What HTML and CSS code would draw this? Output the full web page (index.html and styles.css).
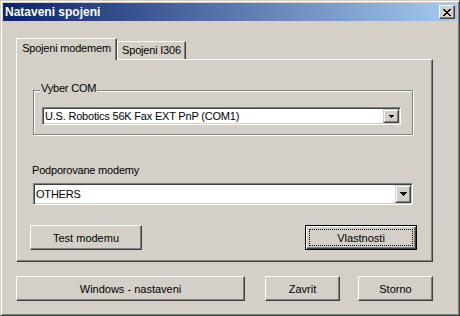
FILE: index.html
```html
<!DOCTYPE html>
<html lang="cs">
<head>
    <meta charset="UTF-8">
    <title>Nataveni spojeni</title>
    <link rel="stylesheet" href="styles.css">
</head>
<body>
    <div class="window">
        <div class="titlebar">
            <span class="title">Nataveni spojeni</span>
            <span class="close">
                <svg width="8" height="7" viewBox="0 0 8 7" shape-rendering="crispEdges"><path d="M0 0h2v1H0zM6 0h2v1H6zM1 1h2v1H1zM5 1h2v1H5zM2 2h4v1H2zM3 3h2v1H3zM2 4h4v1H2zM1 5h2v1H1zM5 5h2v1H5zM0 6h2v1H0zM6 6h2v1H6z" fill="#000"/></svg>
            </span>
        </div>

        <div class="content">
            <div class="tabs">
                <div class="tab tab-active">Spojeni modemem</div>
                <div class="tab tab-back">Spojeni I306</div>
            </div>

            <div class="panel">
                <div class="group">
                    <div class="group-label">Vyber COM</div>
                    <div class="combo combo-small">
                        <span class="combo-text">U.S. Robotics 56K Fax EXT PnP (COM1)</span>
                        <span class="combo-btn">
                            <svg width="5" height="3" viewBox="0 0 5 3" shape-rendering="crispEdges"><path d="M0 0h5v1h-1v1h-1v1h-1v-1h-1v-1h-1z" fill="#000"/></svg>
                        </span>
                    </div>
                </div>

                <div class="field-label">Podporovane modemy</div>
                <div class="combo combo-large">
                    <span class="combo-text">OTHERS</span>
                    <span class="combo-btn">
                        <svg width="7" height="4" viewBox="0 0 7 4" shape-rendering="crispEdges"><path d="M0 0h7v1h-1v1h-1v1h-1v1h-1v-1h-1v-1h-1v-1h-1z" fill="#000"/></svg>
                    </span>
                </div>

                <div class="panel-buttons">
                    <button class="btn btn-panel">Test modemu</button>
                    <button class="btn btn-panel btn-default">Vlastnosti</button>
                </div>
            </div>

            <div class="dialog-buttons">
                <button class="btn btn-wide">Windows - nastaveni</button>
                <button class="btn btn-close">Zavrit</button>
                <button class="btn btn-cancel">Storno</button>
            </div>
        </div>
    </div>
</body>
</html>
```

FILE: styles.css
```css
* {
    box-sizing: border-box;
}

body {
    margin: 0;
    background: #d4d0c8;
    font-family: "Liberation Sans", Arial, sans-serif;
    font-size: 11px;
    letter-spacing: -0.2px;
    color: #000;
    overflow: hidden;
}

.window {
    width: 460px;
    height: 316px;
    padding: 2px;
    background: #d4d0c8;
    border: 1px solid;
    border-color: #d4d0c8 #404040 #404040 #d4d0c8;
    box-shadow: inset 1px 1px #fff, inset -1px -1px #808080;
}

/* barra de titulo */
.titlebar {
    height: 18px;
    display: flex;
    align-items: center;
    justify-content: space-between;
    padding: 0 2px;
    background: linear-gradient(to right, #0a246a, #a6caf0);
}

.title {
    color: #fff;
    font-weight: bold;
    font-size: 12px;
    line-height: 18px;
    letter-spacing: 0;
}

.close {
    width: 16px;
    height: 14px;
    display: flex;
    align-items: center;
    justify-content: center;
    background: #d4d0c8;
    border: 1px solid;
    border-color: #fff #404040 #404040 #fff;
    box-shadow: inset -1px -1px #808080;
}

.content {
    padding: 17px 0 0 13px;
}

/* pestañas */
.tabs {
    display: flex;
    align-items: flex-end;
    height: 21px;
}

.tab {
    background: #d4d0c8;
    text-align: center;
    line-height: 13px;
    border-top: 1px solid #fff;
    border-left: 1px solid #fff;
    border-right: 1px solid #404040;
    box-shadow: inset -1px 0 #808080;
}

.tab-active {
    position: relative;
    z-index: 1;
    width: 101px;
    height: 22px;
    margin-bottom: -1px;
    padding-top: 3px;
}

.tab-back {
    width: 69px;
    height: 18px;
    padding-top: 2px;
}

.panel {
    width: 417px;
    height: 203px;
    border: 1px solid;
    border-color: #fff #404040 #404040 #fff;
    box-shadow: inset -1px -1px #808080;
}

/* marco "Vyber COM" */
.group {
    width: 380px;
    height: 45px;
    margin: 30px 0 0 16px;
    padding-left: 8px;
    border: 1px solid #808080;
    box-shadow: inset 1px 1px #fff, 1px 1px #fff;
}

.group-label {
    width: fit-content;
    margin: -9px 0 0 -2px;
    padding: 0 1px;
    line-height: 13px;
    background: #d4d0c8;
}

.field-label {
    margin: 29px 0 0 15px;
    line-height: 13px;
}

/* combos */
.combo {
    display: flex;
    align-items: stretch;
    padding: 1px;
    background: #fff;
    border: 1px solid;
    border-color: #808080 #fff #fff #808080;
    box-shadow: inset 1px 1px #404040, inset -1px -1px #d4d0c8;
}

.combo-small {
    width: 359px;
    height: 18px;
    margin-top: 12px;
}

.combo-large {
    width: 380px;
    height: 22px;
    margin: 6px 0 0 16px;
}

.combo-text {
    flex: 1;
    display: flex;
    align-items: center;
    padding-left: 1px;
    white-space: nowrap;
}

.combo-btn {
    width: 16px;
    display: flex;
    align-items: center;
    justify-content: center;
    background: #d4d0c8;
    border: 1px solid;
    border-color: #d4d0c8 #404040 #404040 #d4d0c8;
    box-shadow: inset 1px 1px #fff, inset -1px -1px #808080;
}

/* botones */
.btn {
    height: 25px;
    padding: 0;
    font: inherit;
    color: #000;
    background: #d4d0c8;
    border: 1px solid;
    border-color: #fff #404040 #404040 #fff;
    box-shadow: inset -1px -1px #808080;
    border-radius: 0;
}

.panel-buttons {
    display: flex;
    justify-content: space-between;
    margin: 20px 15px 0 13px;
}

.btn-panel {
    width: 112px;
}

.btn-default {
    border: 1px solid #000;
    box-shadow: inset 1px 1px #fff, inset -1px -1px #404040, inset -2px -2px #808080;
    outline: 1px dotted #000;
    outline-offset: -5px;
}

.dialog-buttons {
    display: flex;
    margin-top: 14px;
}

.btn-wide {
    width: 229px;
}

.btn-close {
    width: 75px;
    margin-left: 20px;
}

.btn-cancel {
    width: 75px;
    margin-left: 18px;
}
```
